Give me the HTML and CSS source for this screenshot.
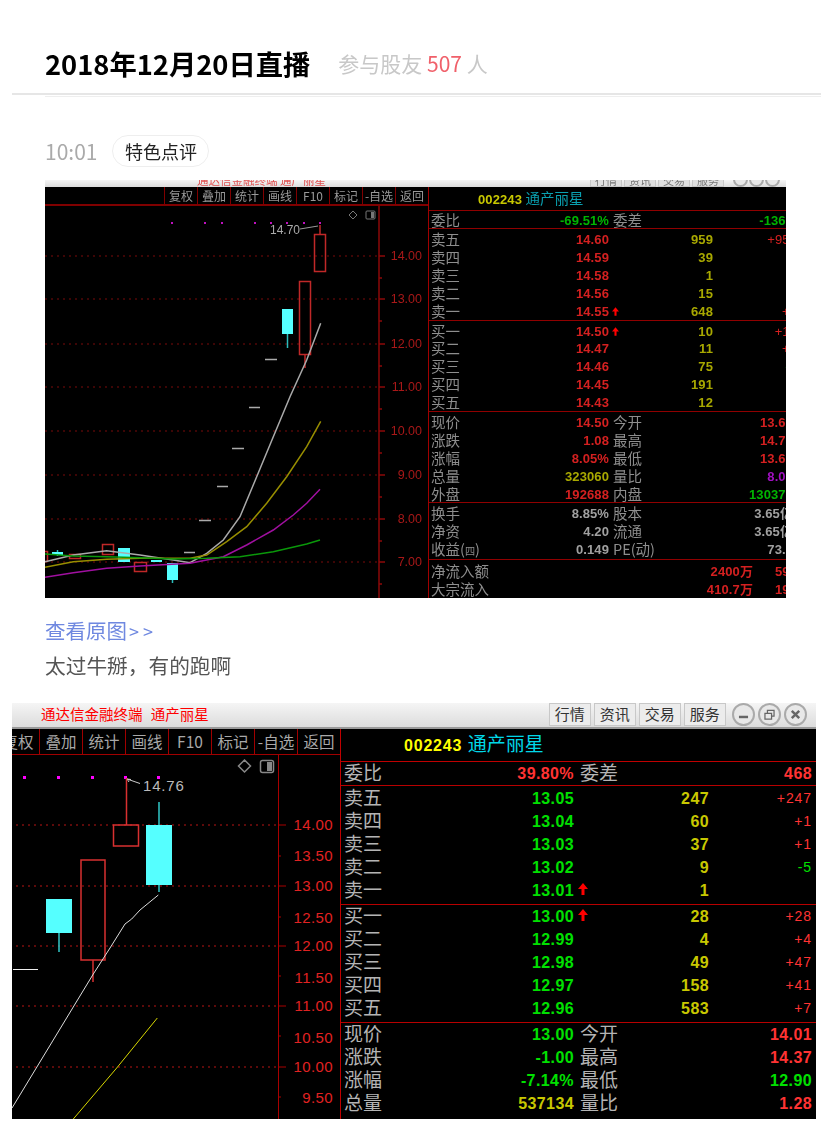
FILE: index.html
```html
<!DOCTYPE html>
<html lang="zh-CN">
<head>
    <meta charset="UTF-8">
    <meta name="viewport" content="width=device-width, initial-scale=1.0">
    <title>2018年12月20日直播</title>
    <link rel="stylesheet" href="styles.css">
</head>
<body>
    <header class="page-head">
        <h1>2018年12月20日直播</h1>
        <p class="joined">参与股友 <em>507</em> 人</p>
    </header>
    <div class="head-line"></div>

    <div class="time-row">
        <span class="time">10:01</span>
        <span class="tag">特色点评</span>
    </div>

    <!-- first screenshot: smaller and blurred -->
    <section class="shot shot-a">
        <div class="titlebar">
            <span class="app-name">通达信金融终端 通产丽星</span>
            <div class="menu">
                <span>行情</span><span>资讯</span><span>交易</span><span>服务</span>
            </div>
            <div class="win-btns"><i></i><i></i><i></i></div>
        </div>
        <div class="terminal">
            <div class="chart">
                <div class="tools">
                    <span>复权</span><span>叠加</span><span>统计</span><span>画线</span><span>F10</span><span>标记</span><span>-自选</span><span>返回</span>
                </div>
                <svg class="plot" viewBox="45 206 383 392" width="383" height="392">
                    <g class="grid">
                        <path d="M45 256H379M45 299H379M45 344H379M45 387H379M45 431H379M45 475H379M45 519H379M45 562H379"/>
                    </g>
                    <path class="axis" d="M379 206V598M379 256h6M379 278h3M379 299h6M379 321h3M379 344h6M379 366h3M379 387h6M379 409h3M379 431h6M379 453h3M379 475h6M379 497h3M379 519h6M379 541h3M379 562h6M379 584h3"/>
                    <g class="ticks">
                        <text x="422" y="260">14.00</text>
                        <text x="422" y="303">13.00</text>
                        <text x="422" y="348">12.00</text>
                        <text x="422" y="391">11.00</text>
                        <text x="422" y="435">10.00</text>
                        <text x="422" y="479">9.00</text>
                        <text x="422" y="523">8.00</text>
                        <text x="422" y="566">7.00</text>
                    </g>
                    <g class="dots-a">
                        <rect x="171" y="222" width="2" height="2"/><rect x="204" y="222" width="2" height="2"/><rect x="221" y="222" width="2" height="2"/><rect x="254" y="222" width="2" height="2"/><rect x="270" y="222" width="2" height="2"/><rect x="286" y="222" width="2" height="2"/><rect x="303" y="222" width="2" height="2"/><rect x="319" y="222" width="2" height="2"/>
                    </g>
                    <path class="mark" d="M353 211l4 4-4 4-4-4z"/>
                    <rect class="mark" x="366" y="211" width="9" height="8" rx="1"/>
                    <rect class="mark-fill" x="371" y="212" width="3" height="6"/>
                    <text class="peak-a" x="270" y="234">14.70</text>
                    <path class="peak-line" d="M300 229l18-3"/>

                    <g class="up">
                        <path d="M320 225v9M305 354v14"/>
                        <rect x="314.500" y="234.500" width="11" height="37"/>
                        <rect x="299.500" y="281.500" width="11" height="73"/>
                        <rect x="134.500" y="562.500" width="12" height="9"/>
                        <rect x="102.500" y="544.500" width="11" height="10"/>
                        <rect x="69.500" y="554.500" width="11" height="4"/>
                        <rect x="42.500" y="551.500" width="5" height="10"/>
                    </g>
                    <g class="down">
                        <path d="M287.500 334v14M172.500 580v3M57.500 550v6"/>
                        <rect x="282" y="309" width="11" height="25"/>
                        <rect x="167" y="563" width="11" height="17"/>
                        <rect x="151" y="560" width="11" height="2"/>
                        <rect x="118" y="548" width="12" height="14"/>
                        <rect x="52" y="552" width="11" height="3"/>
                    </g>
                    <path class="flat" d="M265 359.500h12M249 407.500h11M232 448.500h12M217 486.500h11M199 520.500h12M184 552.500h11"/>

                    <polyline class="ma-white" points="45,561.700 73.300,555 106.700,550.700 140,555 173.300,560 190,562.700 206.700,553.300 223.300,540 240,516.700 256.700,476.700 273.300,436.700 290,396.700 306.700,360 320.700,323.300"/>
                    <polyline class="ma-yellow" points="45,567.300 73.300,561.700 106.700,559.300 140,558.300 173.300,558.300 190,558.300 206.700,555 226.700,541.700 246.700,526.700 266.700,503.300 286.700,476.700 306.700,446.700 320.700,421.300"/>
                    <polyline class="ma-purple" points="45,577.300 73.300,572.700 106.700,568.300 140,566 190,563.300 223.300,556.700 246.700,545 273.300,530 293.300,515 306.700,503.300 320,489.300"/>
                    <polyline class="ma-green" points="45,554 73.300,556 106.700,556.700 140,557.700 173.300,559 206.700,558.300 240,556.700 273.300,551.700 306.700,544 320,540"/>
                </svg>
            </div>

            <div class="quote">
                <div class="stock"><b>002243</b> <span>通产丽星</span></div>
                <div class="block">
                    <div class="row"><span class="lab">委比</span><span class="g">-69.51%</span><span class="lab">委差</span><span></span><span class="g">-1363</span></div>
                </div>
                <div class="block">
                    <div class="row"><span class="lab">卖五</span><span class="r">14.60</span><span></span><span class="y">959</span><span class="r dl">+959</span></div>
                    <div class="row"><span class="lab">卖四</span><span class="r">14.59</span><span></span><span class="y">39</span><span></span></div>
                    <div class="row"><span class="lab">卖三</span><span class="r">14.58</span><span></span><span class="y">1</span><span></span></div>
                    <div class="row"><span class="lab">卖二</span><span class="r">14.56</span><span></span><span class="y">15</span><span></span></div>
                    <div class="row"><span class="lab">卖一</span><span class="r">14.55</span><span><svg class="arrow" viewBox="0 0 10 12"><path d="M5 0l5 6H6.500v6h-3V6H0z"/></svg></span><span class="y">648</span><span class="r dl">+2</span></div>
                </div>
                <div class="block">
                    <div class="row"><span class="lab">买一</span><span class="r">14.50</span><span><svg class="arrow" viewBox="0 0 10 12"><path d="M5 0l5 6H6.500v6h-3V6H0z"/></svg></span><span class="y">10</span><span class="r dl">+10</span></div>
                    <div class="row"><span class="lab">买二</span><span class="r">14.47</span><span></span><span class="y">11</span><span class="r dl">+2</span></div>
                    <div class="row"><span class="lab">买三</span><span class="r">14.46</span><span></span><span class="y">75</span><span class="g dl">-1</span></div>
                    <div class="row"><span class="lab">买四</span><span class="r">14.45</span><span></span><span class="y">191</span><span></span></div>
                    <div class="row"><span class="lab">买五</span><span class="r">14.43</span><span></span><span class="y">12</span><span></span></div>
                </div>
                <div class="block">
                    <div class="row"><span class="lab">现价</span><span class="r">14.50</span><span class="lab">今开</span><span></span><span class="r">13.67</span></div>
                    <div class="row"><span class="lab">涨跌</span><span class="r">1.08</span><span class="lab">最高</span><span></span><span class="r">14.70</span></div>
                    <div class="row"><span class="lab">涨幅</span><span class="r">8.05%</span><span class="lab">最低</span><span></span><span class="r">13.67</span></div>
                    <div class="row"><span class="lab">总量</span><span class="y">323060</span><span class="lab">量比</span><span></span><span class="p">8.07</span></div>
                    <div class="row"><span class="lab">外盘</span><span class="r">192688</span><span class="lab">内盘</span><span></span><span class="g">130372</span></div>
                </div>
                <div class="block">
                    <div class="row"><span class="lab">换手</span><span class="w">8.85%</span><span class="lab">股本</span><span></span><span class="w">3.65亿</span></div>
                    <div class="row"><span class="lab">净资</span><span class="w">4.20</span><span class="lab">流通</span><span></span><span class="w">3.65亿</span></div>
                    <div class="row"><span class="lab">收益(<small>四</small>)</span><span class="w">0.149</span><span class="lab">PE(动)</span><span></span><span class="w">73.7</span></div>
                </div>
                <div class="block last">
                    <div class="row flow"><span class="lab">净流入额</span><span class="r">2400万</span><span class="r">59.1%</span></div>
                    <div class="row flow"><span class="lab">大宗流入</span><span class="r">410.7万</span><span class="r">19.3%</span></div>
                </div>
            </div>
        </div>
    </section>

    <a class="origin" href="#">查看原图<span>&gt;&gt;</span></a>
    <p class="comment">太过牛掰，有的跑啊</p>

    <!-- second screenshot -->
    <section class="shot shot-b">
        <div class="titlebar">
            <span class="app-name">通达信金融终端 通产丽星</span>
            <div class="menu">
                <span>行情</span><span>资讯</span><span>交易</span><span>服务</span>
            </div>
            <div class="win-btns">
                <i><svg viewBox="0 0 23 23"><path d="M6 14.500h11" class="glyph"/></svg></i>
                <i><svg viewBox="0 0 23 23"><path d="M6 10h8v7H6zM9 10V6.500h8v7h-3" class="glyph thin"/></svg></i>
                <i><svg viewBox="0 0 23 23"><path d="M7 7l9 9M16 7l-9 9" class="glyph"/></svg></i>
            </div>
        </div>
        <div class="terminal">
            <div class="chart">
                <div class="tools">
                    <span>复权</span><span>叠加</span><span>统计</span><span>画线</span><span>F10</span><span>标记</span><span>-自选</span><span>返回</span>
                </div>
                <svg class="plot" viewBox="12 755 328 364" width="328" height="364">
                    <g class="grid">
                        <path d="M16 825H278M16 886H278M16 946H278M16 1006H278M16 1067H278"/>
                    </g>
                    <path class="axis" d="M278.500 755V1119M278 825h8M278 856h3M278 886h8M278 917h3M278 946h8M278 976h3M278 1006h8M278 1036h3M278 1067h8M278 1097h3"/>
                    <g class="ticks">
                        <text x="333" y="830">14.00</text>
                        <text x="333" y="861">13.50</text>
                        <text x="333" y="891">13.00</text>
                        <text x="333" y="923">12.50</text>
                        <text x="333" y="951">12.00</text>
                        <text x="333" y="983">11.50</text>
                        <text x="333" y="1011">11.00</text>
                        <text x="333" y="1043">10.50</text>
                        <text x="333" y="1072">10.00</text>
                        <text x="333" y="1103">9.50</text>
                    </g>
                    <g class="dots-b">
                        <rect x="23" y="776" width="3" height="3"/><rect x="57" y="776" width="3" height="3"/><rect x="91" y="776" width="3" height="3"/><rect x="124" y="776" width="3" height="3"/><rect x="157" y="776" width="3" height="3"/>
                    </g>
                    <path class="mark-b" d="M244.500 760l6 6-6 6-6-6z"/>
                    <rect class="mark-b" x="260.500" y="760.500" width="13" height="12" rx="2"/>
                    <rect class="mark-fill" x="267" y="762" width="5" height="9"/>
                    <text class="peak-b" x="143" y="791">14.76</text>
                    <path class="peak-line-b" d="M127 779l13 4.500M127 779l4 .500M127 779l2 3"/>

                    <g class="up up-b">
                        <path d="M126.500 778v47M93 960v22"/>
                        <rect x="113.500" y="825" width="25" height="21"/>
                        <rect x="81" y="860" width="24" height="100"/>
                    </g>
                    <g class="down">
                        <path class="wick-b" d="M59 932v20M159 802v23M159 885v7"/>
                        <rect x="46" y="899" width="26" height="34"/>
                        <rect x="146" y="825" width="26" height="60"/>
                    </g>
                    <path class="flat-b" d="M13 969.500h25"/>
                    <polyline class="line-white" points="12,1108 93.300,974 110,948 125,924 131.700,919 140,910 158.300,895"/>
                    <polyline class="line-yellow" points="73.300,1119 116.700,1068 157.300,1018"/>
                </svg>
            </div>

            <div class="quote">
                <div class="stock"><b>002243</b> <span>通产丽星</span></div>
                <div class="block">
                    <div class="row"><span class="lab">委比</span><span class="r">39.80%</span><span class="lab">委差</span><span></span><span class="r">468</span></div>
                </div>
                <div class="block">
                    <div class="row"><span class="lab">卖五</span><span class="g">13.05</span><span></span><span class="y">247</span><span class="r dl">+247</span></div>
                    <div class="row"><span class="lab">卖四</span><span class="g">13.04</span><span></span><span class="y">60</span><span class="r dl">+1</span></div>
                    <div class="row"><span class="lab">卖三</span><span class="g">13.03</span><span></span><span class="y">37</span><span class="r dl">+1</span></div>
                    <div class="row"><span class="lab">卖二</span><span class="g">13.02</span><span></span><span class="y">9</span><span class="g dl">-5</span></div>
                    <div class="row"><span class="lab">卖一</span><span class="g">13.01</span><span><svg class="arrow" viewBox="0 0 10 12"><path d="M5 0l5 6H6.500v6h-3V6H0z"/></svg></span><span class="y">1</span><span></span></div>
                </div>
                <div class="block">
                    <div class="row"><span class="lab">买一</span><span class="g">13.00</span><span><svg class="arrow" viewBox="0 0 10 12"><path d="M5 0l5 6H6.500v6h-3V6H0z"/></svg></span><span class="y">28</span><span class="r dl">+28</span></div>
                    <div class="row"><span class="lab">买二</span><span class="g">12.99</span><span></span><span class="y">4</span><span class="r dl">+4</span></div>
                    <div class="row"><span class="lab">买三</span><span class="g">12.98</span><span></span><span class="y">49</span><span class="r dl">+47</span></div>
                    <div class="row"><span class="lab">买四</span><span class="g">12.97</span><span></span><span class="y">158</span><span class="r dl">+41</span></div>
                    <div class="row"><span class="lab">买五</span><span class="g">12.96</span><span></span><span class="y">583</span><span class="r dl">+7</span></div>
                </div>
                <div class="block">
                    <div class="row"><span class="lab">现价</span><span class="g">13.00</span><span class="lab">今开</span><span></span><span class="r">14.01</span></div>
                    <div class="row"><span class="lab">涨跌</span><span class="g">-1.00</span><span class="lab">最高</span><span></span><span class="r">14.37</span></div>
                    <div class="row"><span class="lab">涨幅</span><span class="g">-7.14%</span><span class="lab">最低</span><span></span><span class="g">12.90</span></div>
                    <div class="row"><span class="lab">总量</span><span class="y">537134</span><span class="lab">量比</span><span></span><span class="r">1.28</span></div>
                </div>
            </div>
        </div>
    </section>
</body>
</html>
```

FILE: styles.css
```css
body {
    margin: 0;
    padding-bottom: 18px;
    background: #fff;
    font-family: "Noto Sans CJK SC", "Liberation Sans", sans-serif;
}

/* page header */
.page-head {
    display: flex;
    align-items: center;
    height: 93px;
    margin: 0 7px 0 12px;
    padding: 0 0 0 33px;
    border-bottom: 2px solid #e6e6e6;
    filter: blur(.4px);
}
.page-head h1 {
    margin: 33px 0 0;
    font-size: 27.300px;
    line-height: 40px;
    font-weight: 700;
    color: #000;
}
.joined {
    margin: 33px 0 0 28px;
    font-size: 21px;
    line-height: 30px;
    color: #c8c8c8;
}
.joined em {
    font-style: normal;
    color: #f0606a;
}
.head-line {
    height: 1px;
    margin: 1px 7px 0 45px;
    background: #eee;
}

.time-row {
    display: flex;
    align-items: center;
    height: 32px;
    margin: 38px 0 13px 45px;
    filter: blur(.3px);
}
.time {
    font-size: 21px;
    color: #aaa;
}
.tag {
    margin-left: 15px;
    padding: 0 11.500px;
    border: 1px solid #eee;
    border-radius: 16px;
    font-size: 18px;
    line-height: 30px;
    color: #222;
}

/* screenshots */
.shot {
    overflow: hidden;
}
.shot-a {
    width: 741px;
    height: 418px;
    margin-left: 45px;
    filter: blur(.65px);
}
.shot-b {
    width: 804px;
    height: 417px;
    margin: 22px 0 0 12px;
}

.titlebar {
    display: flex;
    align-items: flex-end;
    box-sizing: border-box;
    overflow: hidden;
    background: linear-gradient(#f5f5f5, #dcdcdc);
}
.app-name {
    flex: none;
    color: #f00;
    white-space: nowrap;
}
.menu {
    display: flex;
    flex: none;
}
.menu span {
    box-sizing: border-box;
    border: 1px solid #c8c8c8;
    background: #ececec;
    color: #333;
    text-align: center;
    white-space: nowrap;
}
.win-btns {
    display: flex;
    flex: none;
}
.win-btns i {
    display: block;
    flex: none;
    box-sizing: border-box;
    border: 2px solid #aaa;
    border-radius: 50%;
    background: #e8e8e8;
}
.win-btns svg {
    display: block;
    width: 100%;
    height: 100%;
}
.glyph {
    fill: none;
    stroke: #666;
    stroke-width: 3;
}
.glyph.thin {
    stroke-width: 1.500;
}

.terminal {
    display: flex;
    background: #000;
}
.chart {
    flex: none;
    overflow: hidden;
}
.tools {
    display: flex;
    justify-content: flex-end;
}
.tools span {
    flex: none;
    box-sizing: border-box;
    text-align: center;
    white-space: nowrap;
    color: #a8a8a8;
}
.plot {
    display: block;
}
.plot polyline,
.plot path {
    fill: none;
}
.grid path {
    stroke-dasharray: 2 4;
}
.ticks text {
    text-anchor: end;
    font-family: "Liberation Sans", sans-serif;
}
.down rect {
    fill: #55ffff;
}
.up rect {
    fill: none;
}

.quote {
    flex: none;
    box-sizing: border-box;
    overflow: hidden;
    font-family: "Liberation Sans", "Noto Sans CJK SC", sans-serif;
}
.stock {
    white-space: nowrap;
}
.stock b {
    color: #ffff00;
}
.row {
    display: grid;
    white-space: nowrap;
    font-weight: 700;
}
.row > span {
    text-align: right;
    display: block;
}
.row > .lab {
    text-align: left;
    font-family: "Noto Sans CJK SC", sans-serif;
    font-weight: 400;
    color: #b4b4b4;
}
.lab small {
    font-size: 70%;
}
.dl {
    font-weight: 400;
}
.arrow {
    display: block;
    fill: #f00;
}
.r { color: #ff3333; }
.g { color: #00e000; }
.y { color: #c8c800; }
.w { color: #b4b4b4; }
.p { color: #c010e0; }

/* first screenshot sizes */
.shot-a .titlebar {
    height: 7px;
}
.shot-a .app-name {
    margin-left: 152px;
    font-size: 11.500px;
    line-height: 14px;
    color: #e05050;
}
.shot-a .menu {
    margin-left: 264px;
}
.shot-a .menu span {
    width: 32px;
    margin-right: 2px;
    font-size: 11px;
    line-height: 12px;
    color: #777;
    background: #e0e0e0;
}
.shot-a .win-btns {
    margin-left: 6px;
}
.shot-a .win-btns i {
    width: 15px;
    height: 15px;
    margin-left: 1px;
}
.shot-a .chart {
    width: 383px;
    border-right: 1px solid #a00000;
}
.shot-a .tools {
    height: 17px;
    border-bottom: 2px solid #800000;
}
.shot-a .tools span {
    width: 33px;
    border-left: 1px solid #800000;
    font-size: 12px;
    line-height: 17px;
    color: #999;
}
.shot-a .grid path {
    stroke: #7a0a0a;
}
.shot-a .axis {
    stroke: #8c0808;
    stroke-width: 1.500;
}
.shot-a .ticks text {
    fill: #a81818;
    font-size: 12.500px;
}
.dots-a rect { fill: #c010c0; }
.mark {
    stroke: #777;
    fill: none;
}
.mark-fill {
    fill: #777;
}
.peak-a {
    fill: #aaa;
    font: 12px "Liberation Sans", sans-serif;
}
.peak-line {
    stroke: #999;
}
.shot-a .up path,
.shot-a .up rect {
    stroke: #c02828;
    stroke-width: 1.500;
}
.shot-a .down path {
    stroke: #2bbcbc;
    stroke-width: 1.500;
}
.flat {
    stroke: #aaa;
    stroke-width: 1.500;
}
.ma-white { stroke: #aaa; stroke-width: 1.500; }
.ma-yellow { stroke: #988e00; stroke-width: 1.500; }
.ma-purple { stroke: #a010a0; stroke-width: 1.500; }
.ma-green { stroke: #0a980a; stroke-width: 1.500; }

.shot-a .quote {
    width: 357px;
    font-size: 13px;
}
.shot-a .stock {
    height: 24px;
    padding-left: 49px;
    line-height: 24px;
    border-bottom: 1px solid #900000;
    box-sizing: border-box;
}
.shot-a .stock b {
    color: #c8c800;
    font-size: 13px;
    letter-spacing: .1px;
}
.shot-a .stock span {
    color: #0aa0b0;
    font: 14.500px "Noto Sans CJK SC", sans-serif;
}
.shot-a .block {
    box-sizing: border-box;
    border-bottom: 1px solid #900000;
    padding-top: .5px;
}
.shot-a .block:nth-child(2) { height: 18px; padding-top: 0; }
.shot-a .block:nth-child(3) { height: 92px; padding-top: 1px; }
.shot-a .block:nth-child(4) { height: 91px; }
.shot-a .block:nth-child(5) { height: 91px; padding-top: 1px; }
.shot-a .block:nth-child(6) { height: 57px; padding-top: 1px; }
.shot-a .block.last { border: 0; padding-top: 2px; }
.shot-a .row {
    grid-template-columns: 60px 118px 40px 64px 80px;
    padding-left: 2px;
    height: 17.900px;
    line-height: 20px;
}
.shot-a .row > span {
    letter-spacing: .1px;
}
.shot-a .row > .lab {
    font-size: 14.500px;
    line-height: 17.900px;
    letter-spacing: 0;
    color: #8e8e8e;
}
.shot-a .row > .lab:nth-child(3) {
    padding-left: 4px;
}
.shot-a .r { color: #d42020; }
.shot-a .g { color: #00b400; }
.shot-a .y { color: #a8a800; }
.shot-a .w { color: #a0a0a0; }
.shot-a .p { color: #a010c0; }
.shot-a .row > .dl {
    margin-right: -4px;
}
.shot-a .arrow {
    width: 7px;
    height: 9px;
    margin: 5px 0 0 3px;
}
.shot-a .flow {
    grid-template-columns: 100px 222px 80px;
}
.shot-a .flow > span:last-child {
    text-align: left;
    padding-left: 22px;
}

/* second screenshot sizes */
.shot-b .titlebar {
    height: 26px;
    align-items: flex-start;
    border-bottom: 2px solid #999;
}
.shot-b .app-name {
    margin: 1px 0 0 29px;
    font-size: 14.500px;
    line-height: 20px;
    word-spacing: 5px;
}
.shot-b .menu {
    margin-left: 340px;
}
.shot-b .menu span {
    width: 42px;
    height: 23px;
    margin-right: 3px;
    font-size: 15px;
    line-height: 19px;
}
.shot-b .win-btns i {
    width: 23px;
    height: 23px;
    margin-left: 3px;
}
.shot-b .chart {
    width: 328px;
    border-right: 1px solid #c00000;
}
.shot-b .tools {
    height: 26px;
    box-sizing: border-box;
    border-bottom: 1px solid #a00000;
}
.shot-b .tools span {
    width: 43px;
    border-left: 1px solid #a00000;
    font-size: 15.500px;
    line-height: 25px;
}
.shot-b .grid path {
    stroke: #b81414;
}
.shot-b .axis {
    stroke: #a80000;
}
.shot-b .ticks text {
    fill: #e02222;
    font-size: 15px;
    letter-spacing: .4px;
}
.dots-b rect { fill: #ff00ff; }
.mark-b {
    stroke: #888;
    stroke-width: 1.500;
}
.shot-b .mark-fill {
    fill: #888;
}
.peak-b {
    fill: #bbb;
    font: 15px "Liberation Sans", sans-serif;
    letter-spacing: .8px;
}
.peak-line-b {
    stroke: #ccc;
}
.up-b path,
.up-b rect {
    stroke: #d83030;
    stroke-width: 1.500;
}
.wick-b {
    stroke: #30c8c8;
    stroke-width: 1.500;
}
.flat-b {
    stroke: #eee;
}
.line-white {
    stroke: #ddd;
    stroke-width: 1;
}
.line-yellow {
    stroke: #d8d800;
    stroke-width: 1;
}

.shot-b .quote {
    width: 475px;
    font-size: 16px;
}
.shot-b .stock {
    box-sizing: border-box;
    height: 33px;
    padding-left: 63px;
    line-height: 33px;
    border-bottom: 1px solid #c00000;
}
.shot-b .stock b {
    font-size: 16px;
    letter-spacing: .8px;
}
.shot-b .stock span {
    margin-left: 1px;
    color: #00d8e8;
    font: 19px "Noto Sans CJK SC", sans-serif;
}
.shot-b .block {
    box-sizing: border-box;
    border-bottom: 1px solid #b80000;
}
.shot-b .block:nth-child(2) { height: 24px; }
.shot-b .block:nth-child(3) { height: 119px; padding-top: 1px; }
.shot-b .block:nth-child(4) { height: 118px; }
.shot-b .block:nth-child(5) { border: 0; }
.shot-b .row {
    grid-template-columns: 80px 150px 66px 69px 103px;
    padding-left: 3px;
    height: 23.100px;
    line-height: 23.100px;
}
.shot-b .row > span {
    letter-spacing: .4px;
}
.shot-b .row > .lab {
    font-size: 19px;
    line-height: 20px;
    letter-spacing: 0;
}
.shot-b .row > .lab:nth-child(3) {
    padding-left: 6px;
}
.shot-b .row > .dl {
    font-size: 14px;
    letter-spacing: .9px;
}
.shot-b .arrow {
    width: 10px;
    height: 12px;
    margin: 4px 0 0 4px;
}

/* under the first screenshot */
.origin {
    display: block;
    margin: 16px 0 0 45px;
    font-size: 20.500px;
    line-height: 32px;
    color: #6f88e0;
    text-decoration: none;
    filter: blur(.3px);
}
.origin span {
    margin-left: 2px;
    letter-spacing: 4px;
    font-size: 18px;
}
.comment {
    margin: 2px 0 0 45px;
    font-size: 20.700px;
    line-height: 32px;
    color: #555;
    filter: blur(.3px);
}
```
